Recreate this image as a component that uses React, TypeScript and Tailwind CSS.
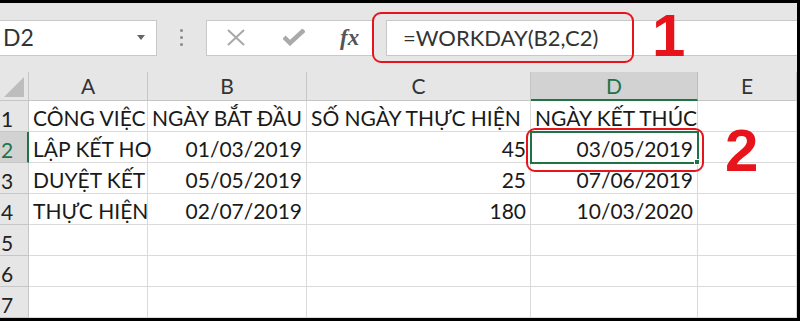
import React from "react";

const cols = ["A", "B", "C", "D", "E"];

type Cell = { text: string; right?: boolean };

const rows: Cell[][] = [
  [
    { text: "CÔNG VIỆC" },
    { text: "NGÀY BẮT ĐẦU" },
    { text: "SỐ NGÀY THỰC HIỆN" },
    { text: "NGÀY KẾT THÚC" },
    { text: "" },
  ],
  [
    { text: "LẬP KẾT HO" },
    { text: "01/03/2019", right: true },
    { text: "45", right: true },
    { text: "03/05/2019", right: true },
    { text: "" },
  ],
  [
    { text: "DUYỆT KẾT" },
    { text: "05/05/2019", right: true },
    { text: "25", right: true },
    { text: "07/06/2019", right: true },
    { text: "" },
  ],
  [
    { text: "THỰC HIỆN" },
    { text: "02/07/2019", right: true },
    { text: "180", right: true },
    { text: "10/03/2020", right: true },
    { text: "" },
  ],
  [],
  [],
  [],
];

const App: React.FC = () => {
  return (
    <div
      className="w-[800px] h-[321px] bg-black pt-[3px] pr-[3px] pb-[3px] overflow-hidden"
      style={{ fontFamily: "Lato, 'Open Sans', sans-serif" }}
    >
      <div className="relative w-[797px] h-[315px] bg-[#e6e6e6] flex flex-col">
        {/* formula bar */}
        <div className="h-[69px] flex items-center shrink-0">
          <div className="flex items-center h-[36px] w-full">
            <div className="w-[157px] h-full bg-white border-y border-r border-[#c8c8c8] flex items-center justify-between pl-[3px] pr-[11px]">
              <span className="text-[23px] text-[#333] leading-none">D2</span>
              <span className="w-0 h-0 border-x-[4px] border-x-transparent border-t-[5px] border-t-[#666]" />
            </div>
            <div className="w-[49px] flex flex-col items-center gap-[4px]">
              <span className="w-[3px] h-[3px] rounded-full bg-[#8a8a8a]" />
              <span className="w-[3px] h-[3px] rounded-full bg-[#8a8a8a]" />
              <span className="w-[3px] h-[3px] rounded-full bg-[#8a8a8a]" />
            </div>
            <div className="w-[167px] h-full bg-white border border-[#c8c8c8] flex items-center">
              <svg width="20" height="17" viewBox="0 0 20 17" className="ml-[19px]">
                <path d="M2 1 L18 16 M18 1 L2 16" stroke="#a8a8a8" strokeWidth="2" fill="none" />
              </svg>
              <svg width="22" height="17" viewBox="0 0 22 17" className="ml-[37px]">
                <path d="M1 8 L7 14 L21 1" stroke="#aaaaaa" strokeWidth="4.5" fill="none" />
              </svg>
              <span
                className="ml-[35px] text-[23px] italic font-bold text-[#555] leading-none"
                style={{ fontFamily: "'Liberation Serif', serif" }}
              >
                fx
              </span>
            </div>
            <div className="w-[13px]" />
            <div className="flex-1 h-full bg-white border-y border-l border-[#c8c8c8] flex items-center pl-[16px]">
              <span className="text-[22px] text-[#333] leading-none">=WORKDAY(B2,C2)</span>
            </div>
          </div>
        </div>

        {/* sheet grid */}
        <div className="grid grid-cols-[29px_119px_159px_224px_167px_99px] grid-rows-[29px_repeat(7,31px)] bg-white">
          <div className="bg-[#e6e6e6] border-r border-b border-[#c6c6c6] relative">
            <span className="absolute right-[4px] bottom-[3px] w-0 h-0 border-l-[20px] border-l-transparent border-b-[20px] border-b-[#bdbdbd]" />
          </div>
          {cols.map((c) => (
            <div
              key={c}
              className={
                c === "D"
                  ? "bg-[#d2d2d2] border-r border-[#bdbdbd] border-b-2 border-b-[#217346] flex items-center justify-center text-[21px] text-[#217346]"
                  : "bg-[#e6e6e6] border-r border-b border-[#c6c6c6] flex items-center justify-center text-[21px] text-[#333]"
              }
            >
              {c}
            </div>
          ))}

          {rows.map((r, i) => (
            <React.Fragment key={i}>
              <div
                className={
                  i === 1
                    ? "bg-[#d2d2d2] border-r-2 border-r-[#217346] border-b border-b-[#c6c6c6] flex items-end pl-[1px] pb-[2px] text-[21px] text-[#217346] leading-none"
                    : "bg-[#e6e6e6] border-r border-b border-[#c6c6c6] flex items-end pl-[1px] pb-[2px] text-[21px] text-[#222] leading-none"
                }
              >
                {i + 1}
              </div>
              {cols.map((c, j) => {
                const cell = r[j];
                return (
                  <div
                    key={c}
                    className={
                      "border-r border-b border-[#dadada] flex items-end pb-[3px] whitespace-nowrap text-[21px] text-[#1a1a1a] leading-none " +
                      (cell && cell.right ? "justify-end pr-[4px] " : "pl-[4px] ") +
                      (i === 1 && j === 3 ? "relative outline-2 outline-[#217346] -outline-offset-1 " : "")
                    }
                  >
                    {cell ? cell.text : ""}
                    {i === 1 && j === 3 && (
                      <span className="absolute right-[-3px] bottom-[-3px] w-[6px] h-[6px] bg-[#217346] border border-white" />
                    )}
                  </div>
                );
              })}
            </React.Fragment>
          ))}
        </div>

        {/* annotations */}
        <div className="absolute left-[372px] top-[9px] w-[262px] h-[51px] border-2 border-[#e8141b] rounded-[9px]" />
        <div
          className="absolute left-[652px] top-[3px] text-[60px] font-bold text-[#e8141b] leading-none"
          style={{ fontFamily: "'Liberation Sans', sans-serif" }}
        >
          1
        </div>
        <div className="absolute left-[526px] top-[125px] w-[178px] h-[44px] border-2 border-[#e8141b] rounded-[9px]" />
        <div
          className="absolute left-[725px] top-[118px] text-[60px] font-bold text-[#e8141b] leading-none"
          style={{ fontFamily: "'Liberation Sans', sans-serif" }}
        >
          2
        </div>
      </div>
    </div>
  );
};

export default App;
